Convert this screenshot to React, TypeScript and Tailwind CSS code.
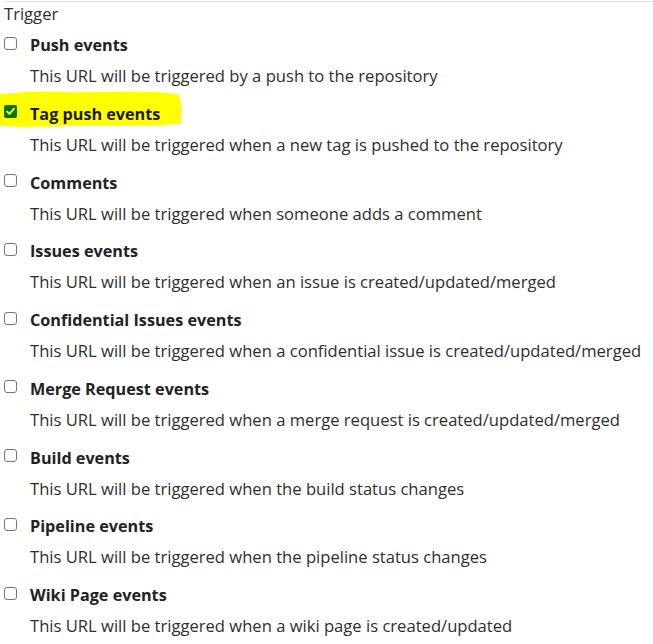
import React from "react";

const items: { title: string; desc: string; checked?: boolean }[] = [
  { title: "Push events", desc: "This URL will be triggered by a push to the repository" },
  { title: "Tag push events", desc: "This URL will be triggered when a new tag is pushed to the repository", checked: true },
  { title: "Comments", desc: "This URL will be triggered when someone adds a comment" },
  { title: "Issues events", desc: "This URL will be triggered when an issue is created/updated/merged" },
  { title: "Confidential Issues events", desc: "This URL will be triggered when a confidential issue is created/updated/merged" },
  { title: "Merge Request events", desc: "This URL will be triggered when a merge request is created/updated/merged" },
  { title: "Build events", desc: "This URL will be triggered when the build status changes" },
  { title: "Pipeline events", desc: "This URL will be triggered when the pipeline status changes" },
  { title: "Wiki Page events", desc: "This URL will be triggered when a wiki page is created/updated" },
];

function Box({ checked }: { checked?: boolean }) {
  if (checked) {
    return (
      <span className="relative z-10 -translate-y-[2px] flex h-[13px] w-[13px] shrink-0 items-center justify-center rounded-[2px] bg-[#007500]">
        <svg width="11" height="11" viewBox="0 0 11 11">
          <path d="M2.2 5.6 L4.4 7.8 L8.8 2.8" fill="none" stroke="#ffff00" strokeWidth="2" strokeLinecap="round" strokeLinejoin="round" />
        </svg>
      </span>
    );
  }
  return <span className="-translate-y-[2px] h-[13px] w-[13px] shrink-0 rounded-[3px] border border-[#767676] bg-white" />;
}

export default function App() {
  return (
    <div className="h-[644px] w-[653px] overflow-hidden bg-white" style={{ fontFamily: '"Open Sans", "Noto Sans", sans-serif' }}>
      <div className="ml-[3px] mt-[1px] border-t border-[#e3e3e3]" />
      <div className="px-[4px] text-[16.6px] leading-[24px] text-[#2e2e2e]">
        <div>Trigger</div>
        <div className="mt-[7px] flex flex-col gap-[13.75px]">
          {items.map((it) => (
            <div key={it.title} className="relative">
              {it.checked && (
                <svg className="absolute left-[-4px] top-[-12px] z-0" width="190" height="40" viewBox="0 0 190 40">
                  <path
                    d="M0 4 C20 2 40 1 60 2 C90 3 120 1 150 2 C165 2 172 3 179 5 C181 12 182 22 181 34 C150 36 110 35 70 36 C40 37 20 37 0 36 Z"
                    fill="#ffff00"
                  />
                </svg>
              )}
              <label className="relative z-10 flex items-center gap-[13px]">
                <Box checked={it.checked} />
                <span className={"text-[16.2px] font-bold " + (it.checked ? "text-[#1a1a00]" : "text-[#222222]")}>{it.title}</span>
              </label>
              <div className="mt-[7px] pl-[26px]">{it.desc}</div>
            </div>
          ))}
        </div>
      </div>
    </div>
  );
}
